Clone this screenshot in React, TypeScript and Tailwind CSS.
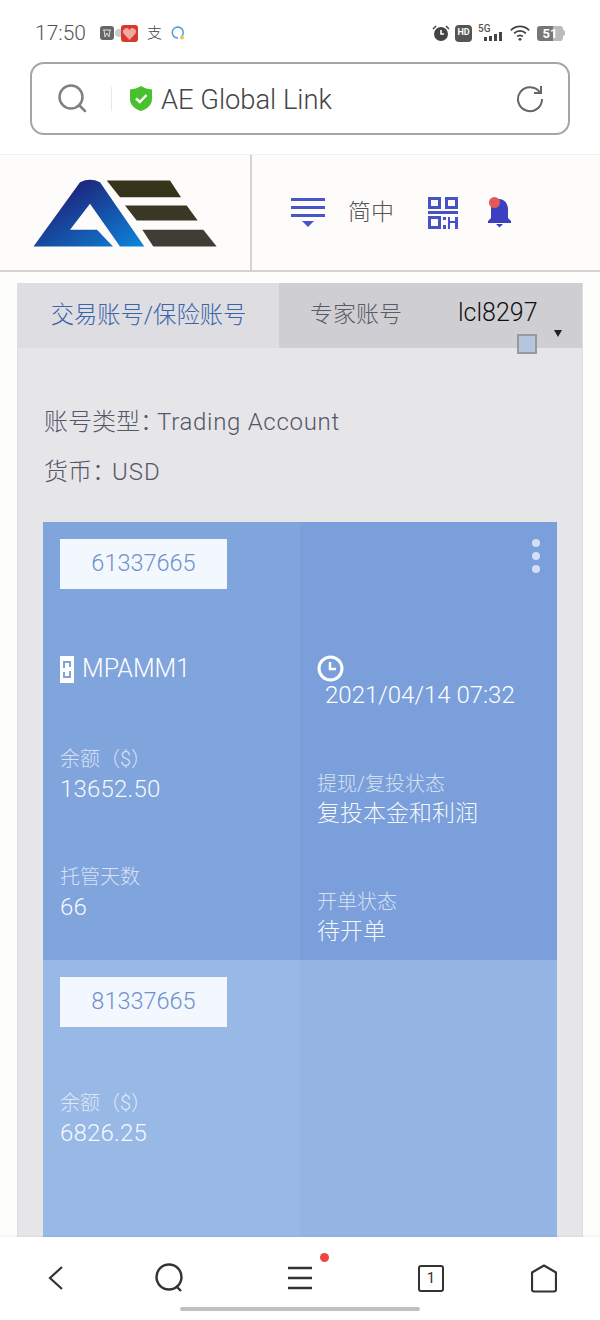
import type { ReactNode } from 'react'

const FONT = "font-['Roboto','Noto_Sans_CJK_SC',sans-serif]"

function Field({ label, value, cjk, className }: { label: string; value: string; cjk?: boolean; className: string }) {
  return (
    <div className={className}>
      <div className="text-[20px] font-light leading-[30px] text-white/70">{label}</div>
      <div className={`${cjk ? 'text-[23px]' : 'text-[24px] tracking-[0.2px]'} font-light leading-[30px] text-white/95`}>{value}</div>
    </div>
  )
}

function AccountNo({ children }: { children: ReactNode }) {
  return (
    <div className="ml-[17px] mt-[17px] flex h-[50px] w-[167px] items-center justify-center bg-[#f3f7fe] text-[23.500px] font-light text-[#6f92cc]">
      {children}
    </div>
  )
}

function StatusBar() {
  return (
    <div className="flex h-[62px] items-center justify-between pl-[35px] pr-[35px] pt-[4px] text-[#555]">
      <div className="flex items-center">
        <span className="mt-[1px] text-[21px] font-light">17:50</span>
        <svg width="26" height="16" viewBox="0 0 26 16" className="ml-[13px]">
          <circle cx="20" cy="8" r="4" fill="#ccc" />
          <rect x="1" y="1" width="14" height="14" rx="3" fill="#666" />
          <path d="M4 5h8M5 5l1 7 2-4 2 4 1-7" stroke="#ddd" strokeWidth="1" fill="none" />
        </svg>
        <svg width="17" height="17" viewBox="0 0 17 17" className="-ml-[4px]">
          <rect width="17" height="17" rx="3" fill="#d9392b" />
          <path d="M8.500 15 2.500 8.500a3.300 3.300 0 0 1 6-3.500 3.300 3.300 0 0 1 6 3.500z" fill="#f0a89f" />
        </svg>
        <span className="ml-[9px] text-[15px] font-light leading-none text-[#444]">支</span>
        <svg width="16" height="16" viewBox="0 0 16 16" className="ml-[8px]">
          <path d="M12 11A5.500 5.500 0 1 0 8 13" fill="none" stroke="#4a9cd6" strokeWidth="1.500" />
          <circle cx="12" cy="12.500" r="2" fill="#e3c85a" />
        </svg>
      </div>
      <div className="flex items-center">
        <svg width="18" height="18" viewBox="0 0 18 18">
          <circle cx="9" cy="10" r="7" fill="#444" />
          <path d="M1 5 4 2M17 5l-3-3" stroke="#444" strokeWidth="1.500" />
          <path d="M9 6v4h3" stroke="#fff" strokeWidth="1.600" fill="none" />
        </svg>
        <div className="ml-[5px] flex h-[17px] w-[17px] items-center justify-center rounded-[4px] bg-[#555] text-[9px] font-bold text-white">
          HD
        </div>
        <svg width="25" height="20" viewBox="0 0 25 20" className="ml-[6px]">
          <text x="0" y="9" fontSize="10" fontWeight="500" fill="#555">5G</text>
          <rect x="6" y="14" width="3" height="4" fill="#444" />
          <rect x="11" y="13" width="3" height="5" fill="#444" />
          <rect x="16" y="11" width="3" height="7" fill="#444" />
          <rect x="21" y="9" width="3" height="9" fill="#444" />
        </svg>
        <svg width="20" height="18" viewBox="0 0 22 18" className="ml-[7px]">
          <path d="M1 6a14 14 0 0 1 20 0M4.500 9.500a9 9 0 0 1 13 0M8 13a4 4 0 0 1 6 0" fill="none" stroke="#444" strokeWidth="2" />
          <circle cx="11" cy="16" r="1.600" fill="#444" />
        </svg>
        <div className="ml-[7px] flex h-[15px] w-[26px] items-center justify-center rounded-[3px] bg-[linear-gradient(90deg,#777_62%,#bbb_62%)] text-[13px] font-bold leading-none text-white">
          51
        </div>
        <div className="h-[6px] w-[2px] rounded-r-sm bg-[#bbb]" />
      </div>
    </div>
  )
}

function UrlBar() {
  return (
    <div className="h-[92px] px-[30px]">
      <div className="flex h-[73px] items-center rounded-[14px] border-[2px] border-[#a5a5a5] bg-white pl-[26px] pr-[24px]">
        <svg width="30" height="30" viewBox="0 0 30 30" fill="none" stroke="#808080" strokeWidth="2.500">
          <circle cx="13" cy="13" r="11.500" />
          <path d="m21 21 6 6" strokeLinecap="round" />
        </svg>
        <div className="ml-[23px] h-[24px] w-px bg-[#e8e8e8]" />
        <svg width="24" height="27" viewBox="0 0 24 27" className="ml-[17px]">
          <path d="M12 1c3 2 7 3.200 11 3.500V14c0 6-5 10-11 12C6 24 1 20 1 14V4.500C5 4.200 9 3 12 1z" fill="#47c22e" />
          <path d="m7 13.500 3.800 3.500L17.500 10" fill="none" stroke="#fff" strokeWidth="2.500" />
        </svg>
        <span className="ml-[8px] mt-[5px] text-[27.300px] font-light leading-none text-[#444]">AE Global Link</span>
        <svg width="28" height="28" viewBox="0 0 28 28" fill="none" stroke="#666" strokeWidth="2" className="ml-auto">
          <path d="M24 7.500A12 12 0 1 0 26 14" />
          <path d="M25 1v7h-7" />
        </svg>
      </div>
    </div>
  )
}

function SiteHeader() {
  return (
    <div className="flex h-[117px] border-b-[2px] border-[#d5d3d0] bg-[#fdfcfa]">
      <div className="flex w-[252px] shrink-0 items-center border-r-[2px] border-[#d5d3d0] pl-[33px] pt-[2px]">
        <svg width="184" height="70" viewBox="0 0 184 70">
          <defs>
            <linearGradient id="logoA" x1="0" y1="0" x2="1" y2="1">
              <stop offset="0.250" stopColor="#1c2a80" />
              <stop offset="1" stopColor="#0c86dc" />
            </linearGradient>
          </defs>
          <path d="M0.500 67.500 47 3.200Q57-1.500 67 3.200L111.300 67.500H87L57 24.800 37 50.800H64L80 67.500Z" fill="url(#logoA)" />
          <path d="M73.700 1.500H137L148 18.200H87Z" fill="#35331a" />
          <path d="M92 26.500H153.700L164.700 41.500H103.700Z" fill="#3a3825" />
          <path d="M109.300 50.800H170.300L183.700 67.500H120.300Z" fill="#3f3e36" />
        </svg>
      </div>
      <div className="flex flex-1 items-center pl-[38px]">
        <svg width="36" height="36" viewBox="0 0 36 36" fill="#4a56c6">
          <rect x="1" y="3" width="34" height="3" />
          <rect x="1" y="11" width="34" height="3" />
          <rect x="1" y="19" width="34" height="3" />
          <path d="M12 26h12l-6 6z" />
        </svg>
        <span className="ml-[22px] text-[23px] font-light leading-none text-[#555]">简中</span>
        <svg width="30" height="32" viewBox="0 0 30 32" fill="#4553c4" className="ml-[34px]">
          <path fillRule="evenodd" d="M0 0h13v12H0zM3 3v6h7V3zM17 0h13v12H17zM20 3v6h7V3z" />
          <rect x="0" y="14" width="30" height="3" />
          <path fillRule="evenodd" d="M0 19h13v13H0zM3 22v7h7v-7z" />
          <rect x="15" y="20" width="3" height="3" />
          <rect x="15" y="28" width="3" height="4" />
          <rect x="20" y="20" width="2" height="12" />
          <rect x="22" y="24" width="5" height="2" />
          <rect x="27" y="20" width="3" height="12" />
        </svg>
        <div className="relative ml-[30px] h-[30px] w-[23px]">
          <svg width="23" height="30" viewBox="0 0 23 30" fill="#3c3fbf">
            <path d="M11 1c6 0 9 5 9 11v8l3 3v2H0v-2l3-3v-8C3 6 5 1 11 1z" />
            <path d="M8 26h7l-3.500 3.500z" />
          </svg>
          <div className="absolute left-[1px] top-[-1px] h-[11px] w-[11px] rounded-full bg-[#e25a58]" />
        </div>
      </div>
    </div>
  )
}

function Tabs() {
  return (
    <div className="relative flex h-[65px] bg-[#cfced3]">
      <div className="flex w-[261px] items-center justify-center bg-[#dddde2] text-[23.300px] font-light text-[#3c64a8]">
        交易账号/保险账号
      </div>
      <div className="ml-[31px] flex items-center text-[23px] font-light text-[#5b5b63]">专家账号</div>
      <div className="ml-[56px] flex h-[60px] items-center text-[25px] font-light text-[#111]">lcl8297</div>
      {/* broken image marker and select arrow sit over the tab bar edge */}
      <div className="absolute left-[499px] top-[51px] h-[20px] w-[20px] border-[2px] border-[#999] bg-[#b4c6de]" />
      <div className="absolute left-[536px] top-[47px] h-0 w-0 border-x-[4px] border-t-[7px] border-x-transparent border-t-[#222]" />
    </div>
  )
}

function Accounts() {
  return (
    <div className="mx-[25px] mt-[25px]">
      <div className="grid h-[438px] grid-cols-2 bg-[#7a9fda]">
        <div className="bg-[#80a4dc]">
          <AccountNo>61337665</AccountNo>
          <div className="ml-[17px] mt-[65px] flex h-[30px] items-center text-[25px] font-light text-white">
            <svg width="14" height="27" viewBox="0 0 14 27" className="mr-[8px]">
              <rect width="14" height="27" fill="#fff" />
              <path d="M4 12V6h6v5M10 15v6H4v-5" fill="none" stroke="#80a4dc" strokeWidth="2" />
            </svg>
            MPAMM1
          </div>
          <Field className="ml-[17px] mt-[60px]" label="余额（$）" value="13652.50" />
          <Field className="ml-[17px] mt-[58px]" label="托管天数" value="66" />
        </div>
        <div className="relative">
          <div className="absolute right-[17px] top-[17px] flex flex-col gap-[5px]">
            <div className="h-[8px] w-[8px] rounded-full bg-[#d3dff3]" />
            <div className="h-[8px] w-[8px] rounded-full bg-[#d3dff3]" />
            <div className="h-[8px] w-[8px] rounded-full bg-[#d3dff3]" />
          </div>
          <svg width="27" height="27" viewBox="0 0 27 27" fill="none" stroke="#fff" strokeWidth="3" className="ml-[17px] mt-[133px]">
            <circle cx="13.500" cy="13.500" r="11.500" />
            <path d="M13 7v7h6" strokeWidth="2.500" />
          </svg>
          <div className="ml-[25px] text-[24px] font-light leading-[26px] text-white">2021/04/14 07:32</div>
          <Field className="ml-[17px] mt-[61px]" label="提现/复投状态" value="复投本金和利润" cjk />
          <Field className="ml-[17px] mt-[58px]" label="开单状态" value="待开单" cjk />
        </div>
      </div>
      <div className="grid h-[300px] grid-cols-2 bg-[#94b4e3]">
        <div className="bg-[#98b8e6]">
          <AccountNo>81337665</AccountNo>
          <Field className="ml-[17px] mt-[61px]" label="余额（$）" value="6826.25" />
        </div>
        <div />
      </div>
    </div>
  )
}

function BottomBar() {
  return (
    <div className="relative z-10 flex h-[83px] flex-col bg-white shadow-[0_-1px_2px_rgba(0,0,0,0.05)]">
      <div className="flex h-[71px] items-center pl-[47px] pt-[11px]">
        <svg width="18" height="26" viewBox="0 0 18 26" fill="none" stroke="#333" strokeWidth="2.200">
          <path d="M15 2 3 13l12 11" />
        </svg>
        <svg width="30" height="30" viewBox="0 0 30 30" fill="none" stroke="#333" strokeWidth="2.400" className="ml-[89px]">
          <circle cx="15" cy="14" r="12.500" />
          <path d="m22 23 5 5" />
        </svg>
        <div className="relative ml-[104px] h-[24px] w-[24px]">
          <svg width="24" height="24" viewBox="0 0 24 24" stroke="#333" strokeWidth="2.400">
            <path d="M0 2h24M0 12h24M0 22h24" />
          </svg>
          <div className="absolute left-[32px] top-[-13px] h-[9px] w-[9px] rounded-full bg-[#ef4444]" />
        </div>
        <div className="ml-[106px] flex h-[27px] w-[26px] items-center justify-center rounded-[3px] border-[2px] border-[#333] text-[15px] font-normal leading-none text-[#333]">
          1
        </div>
        <svg width="26" height="29" viewBox="0 0 26 29" fill="none" stroke="#333" strokeWidth="2.200" className="ml-[87px]">
          <path d="M13 1.500 25 8.500v17a2 2 0 0 1-2 2H3a2 2 0 0 1-2-2V8.500z" strokeLinejoin="round" />
        </svg>
      </div>
      <div className="mx-auto mt-[-1px] h-[4px] w-[240px] rounded-full bg-[#c0c0c0]" />
    </div>
  )
}

export default function App() {
  return (
    <div className={`flex h-[1320px] w-[600px] flex-col overflow-hidden bg-white ${FONT}`}>
      <StatusBar />
      <UrlBar />
      <div className="h-px bg-[#f1f0ee]" />
      <SiteHeader />
      <main className="min-h-0 flex-1 overflow-hidden bg-[#fdfdfc] pl-[17px] pr-[17px] pt-[11px]">
        <div className="h-full border-x border-[#dcdee6] bg-[#e6e6e9]">
          <Tabs />
          <div className="pl-[26px] pt-[49px] text-[24px] font-light leading-[50px] text-[#55566a]">
            <div>
              账号类型<span className="tracking-[-7px]">：</span>
              <span className="tracking-[0.7px]">Trading Account</span>
            </div>
            <div>
              货币<span className="tracking-[-4px]">：</span>
              <span className="tracking-[1px]">USD</span>
            </div>
          </div>
          <Accounts />
        </div>
      </main>
      <BottomBar />
    </div>
  )
}
